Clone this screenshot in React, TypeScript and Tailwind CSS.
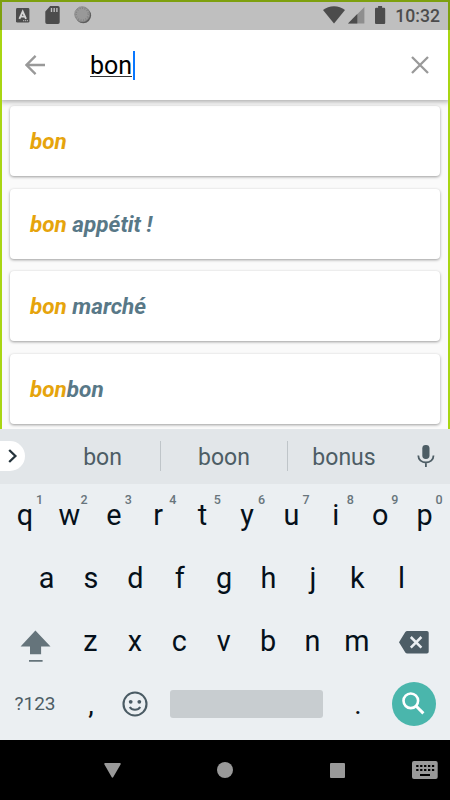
type KeyDef = { label: string; hint?: string };

type Result = { match: string; rest: string };

const RESULTS: Result[] = [
  { match: 'bon', rest: '' },
  { match: 'bon', rest: ' appétit !' },
  { match: 'bon', rest: ' marché' },
  { match: 'bon', rest: 'bon' },
];

const TOP_ROW: KeyDef[] = 'qwertyuiop'.split('').map((label, i) => ({ label, hint: String((i + 1) % 10) }));
const HOME_ROW: KeyDef[] = 'asdfghjkl'.split('').map((label) => ({ label }));
const BOTTOM_ROW: KeyDef[] = 'zxcvbnm'.split('').map((label) => ({ label }));

function StatusBar() {
  return (
    <div className="relative z-20 flex h-[30px] shrink-0 items-center bg-[#bfbfbf] pl-[16px] pr-[10px] text-[#4c4c4c]">
      <svg width="14" height="15" viewBox="0 0 14 15">
        <rect width="13.4" height="14.6" rx="1.4" fill="currentColor" />
        <path d="M3.4 10.8 6.7 3.6 10 10.8M4.7 8.6h4" fill="none" stroke="#d4d4d4" strokeWidth="1.9" />
        <path d="M7 12.7h5" stroke="#bfbfbf" strokeWidth="1" strokeDasharray="1.2 .7" />
      </svg>
      <svg width="15" height="18" viewBox="0 0 15 18" className="ml-[15px]">
        <path d="M5.2 0H13a1.7 1.7 0 0 1 1.7 1.7v14.6A1.7 1.7 0 0 1 13 18H2a1.7 1.7 0 0 1-1.7-1.7V5.4z" fill="currentColor" />
        <path d="M6.5 2v4M9.2 2v4M11.9 2v4" stroke="#bfbfbf" strokeWidth="1.4" />
      </svg>
      <svg width="18" height="18" viewBox="0 0 18 18" className="ml-[13.5px]">
        <circle cx="9.3" cy="9.4" r="7.8" fill="#5c5c5c" />
        <circle cx="8.2" cy="8.2" r="7.5" fill="#999999" stroke="#858585" strokeWidth=".8" />
        <circle cx="8.2" cy="8.2" r="6" fill="none" stroke="#7c7c7c" strokeWidth="1.4" strokeDasharray=".8 1.7" />
      </svg>
      <div className="flex-1" />
      <svg width="22" height="18" viewBox="0 0 22 18">
        <path d="M0 4.1C6-1.2 16-1.2 22 4.1L11 17.6z" fill="currentColor" />
      </svg>
      <svg width="17" height="17" viewBox="0 0 17 17" className="ml-[3px] mt-px">
        <path d="M16.4 0v16.5H0z" fill="#8e8e8e" />
        <path d="M9.3 7.1v9.4H0z" fill="currentColor" />
      </svg>
      <svg width="11" height="19" viewBox="0 0 11 19" className="ml-[10px]">
        <path d="M3.1 0h4v1.8h2a1.1 1.1 0 0 1 1.1 1.1v14a1.1 1.1 0 0 1-1.1 1.1H1.1A1.1 1.1 0 0 1 0 16.9v-14a1.1 1.1 0 0 1 1.1-1.1h2z" fill="currentColor" />
      </svg>
      <span className="ml-[9.5px] mt-[3px] text-[17.6px] font-medium">10:32</span>
    </div>
  );
}

function SearchBar() {
  return (
    <div className="relative z-10 flex h-[70px] shrink-0 items-center bg-white pl-[25px] pr-[21px] shadow-[0_1px_6px_rgba(0,0,0,0.4)]">
      <svg width="20" height="20" viewBox="0 0 20 20" fill="none" stroke="#999999" strokeWidth="2.3">
        <path d="M20 10H1.8M10.6.9 1.5 10l9.1 9.1" />
      </svg>
      <div className="ml-[45px] flex items-center">
        <span className="mt-[2px] border-b border-[#333333] text-[25px] leading-[21px] text-black">bon</span>
        <span className="ml-[0.6px] h-[29px] w-[2.4px] bg-[#0877ff]" />
      </div>
      <div className="flex-1" />
      <svg width="18" height="18" viewBox="0 0 18 18" fill="none" stroke="#999999" strokeWidth="2.3">
        <path d="m1 1 16 16M17 1 1 17" />
      </svg>
    </div>
  );
}

function ResultCard({ match, rest }: Result) {
  return (
    <div className="flex h-[70px] shrink-0 items-center rounded-[4px] bg-white pl-[20px] pt-[1.5px] text-[22.5px] font-bold italic shadow-[0_1px_3px_rgba(0,0,0,0.38)]">
      <span className="whitespace-pre text-[#e6a40c]">
        {match}
        <span className="text-[#587887]">{rest}</span>
      </span>
    </div>
  );
}

function SuggestionStrip() {
  return (
    <div className="flex h-[55px] shrink-0 items-center bg-[#e2e6e9] text-[23px] text-[#4d5d65]">
      <div className="-mt-px flex h-[30px] w-[25px] items-center rounded-r-full bg-white pl-[8px]">
        <svg width="10" height="14" viewBox="0 0 10 14" fill="none" stroke="#25343c" strokeWidth="2.3">
          <path d="m1.2 1 6.2 6-6.2 6" />
        </svg>
      </div>
      <span className="ml-[20px] w-[115px] pt-[3px] text-center">bon</span>
      <span className="-mt-px h-[30px] w-px bg-[#bfc5c9]" />
      <span className="w-[126px] pt-[3px] text-center">boon</span>
      <span className="-mt-px h-[30px] w-px bg-[#bfc5c9]" />
      <span className="w-[112px] pt-[3px] text-center">bonus</span>
      <svg width="18" height="23" viewBox="0 0 18 23" className="ml-[17px] -mt-px">
        <rect x="5.3" y="0" width="7.2" height="14" rx="3.4" fill="#4d5d65" />
        <path d="M1.3 10.5c0 4.3 3.4 7 7.6 7s7.6-2.7 7.6-7M8.9 17.5V22" fill="none" stroke="#4d5d65" strokeWidth="1.8" />
      </svg>
    </div>
  );
}

function Key({ label, hint }: KeyDef) {
  return (
    <div className="relative flex h-[63px] w-[44.4px] items-center justify-center pt-px text-[28.8px] text-[#05101a]">
      {label}
      {hint && <span className="absolute right-[4px] top-[8px] text-[12.5px] font-medium leading-[16px] text-[#68757c]">{hint}</span>}
    </div>
  );
}

function Keyboard() {
  return (
    <div className="flex h-[311px] shrink-0 flex-col bg-[#ebeff2]">
      <SuggestionStrip />
      <div className="flex pl-[2.8px]">
        {TOP_ROW.map((key) => <Key key={key.label} {...key} />)}
      </div>
      <div className="flex pl-[24.3px]">
        {HOME_ROW.map((key) => <Key key={key.label} {...key} />)}
      </div>
      <div className="flex items-center">
        <div className="w-[68.3px] pl-[20px]">
          <svg width="31" height="32" viewBox="0 0 31 32" fill="#65747b" className="mt-[8px]">
            <path d="M15.4.5 30.5 16.5h-9.4v7.8H10v-7.8H.6zM9 30h13.6v1.7H9z" />
          </svg>
        </div>
        {BOTTOM_ROW.map((key) => <Key key={key.label} {...key} />)}
        <svg width="30" height="23" viewBox="0 0 30 23" className="ml-[20px] mt-[2px]">
          <path d="M8.3 0h19.6a1.8 1.8 0 0 1 1.8 1.8v19a1.8 1.8 0 0 1-1.8 1.8H8.3a2.6 2.6 0 0 1-2-1L0 11.3 6.3 1a2.6 2.6 0 0 1 2-1z" fill="#4d5d66" />
          <path d="m11.8 6 10.6 10.6M22.4 6 11.8 16.6" stroke="#ebeff2" strokeWidth="2.5" />
        </svg>
      </div>
      <div className="flex h-[61px] items-center">
        <span className="w-[70px] pt-[2px] text-center text-[19px] text-[#4d5d65]">?123</span>
        <span className="w-[42px] pt-[2px] text-center text-[28px] text-[#05101a]">,</span>
        <svg width="26" height="26" viewBox="0 0 26 26" className="ml-[10px]" fill="none" stroke="#4a5b64" strokeWidth="2.1">
          <circle cx="13" cy="13" r="11.5" />
          <path d="M7.8 16c2.2 3.6 8.2 3.6 10.4 0" />
          <circle cx="8.7" cy="10.8" r="1.9" fill="#4a5b64" stroke="none" />
          <circle cx="17.3" cy="10.8" r="1.9" fill="#4a5b64" stroke="none" />
        </svg>
        <div className="ml-[22px] h-[28px] w-[153px] rounded-[3px] bg-[#c8cdd0]" />
        <span className="w-[70px] pt-[2px] text-center text-[28px] text-[#05101a]">.</span>
        <div className="-ml-px flex h-[44px] w-[44px] items-center justify-center rounded-full bg-[#4ab6ac]">
          <svg width="23" height="23" viewBox="0 0 23 23" fill="none" stroke="white" strokeWidth="2.6" className="-mt-px -ml-px">
            <circle cx="8.8" cy="8.8" r="7.3" />
            <path d="m13.8 13.8 7.6 7.6" strokeWidth="3" />
          </svg>
        </div>
      </div>
    </div>
  );
}

function NavBar() {
  return (
    <div className="flex h-[60px] shrink-0 items-center bg-black pl-[104px] text-[#999999]">
      <svg width="17" height="15" viewBox="0 0 17 15" fill="currentColor">
        <path d="M1 0h15a.8.8 0 0 1 .7 1.2L9.3 14a1 1 0 0 1-1.7 0L.3 1.2A.8.8 0 0 1 1 0z" />
      </svg>
      <div className="ml-[96px] h-[16px] w-[16px] rounded-full bg-[#999999]" />
      <div className="ml-[97px] h-[15px] w-[15px] rounded-[1px] bg-[#999999]" />
      <svg width="26" height="18" viewBox="0 0 26 18" className="ml-[67px]">
        <rect width="25.7" height="18" rx="2" fill="currentColor" />
        <path d="M4.2 5h18M4.2 9h18" stroke="black" strokeWidth="2.2" strokeDasharray="2.3 1.63" />
        <path d="M8 14h10" stroke="black" strokeWidth="2" />
      </svg>
    </div>
  );
}

export default function App() {
  return (
    <div className="flex h-[800px] w-[450px] flex-col overflow-hidden font-['Roboto',sans-serif]">
      <div className="relative flex h-[429px] shrink-0 flex-col overflow-hidden bg-[#fafafa]">
        <StatusBar />
        <SearchBar />
        <div className="flex flex-col gap-[12.5px] px-[10px] pt-[6.3px]">
          {RESULTS.map((result) => <ResultCard key={result.match + result.rest} {...result} />)}
        </div>
        <div className="pointer-events-none absolute inset-0 z-30 flex flex-col">
          <div className="h-[30px] border-x-2 border-t-2 border-[#7ea00e]" />
          <div className="flex-1 border-x-2 border-[#a9d613]" />
        </div>
      </div>
      <Keyboard />
      <NavBar />
    </div>
  );
}
